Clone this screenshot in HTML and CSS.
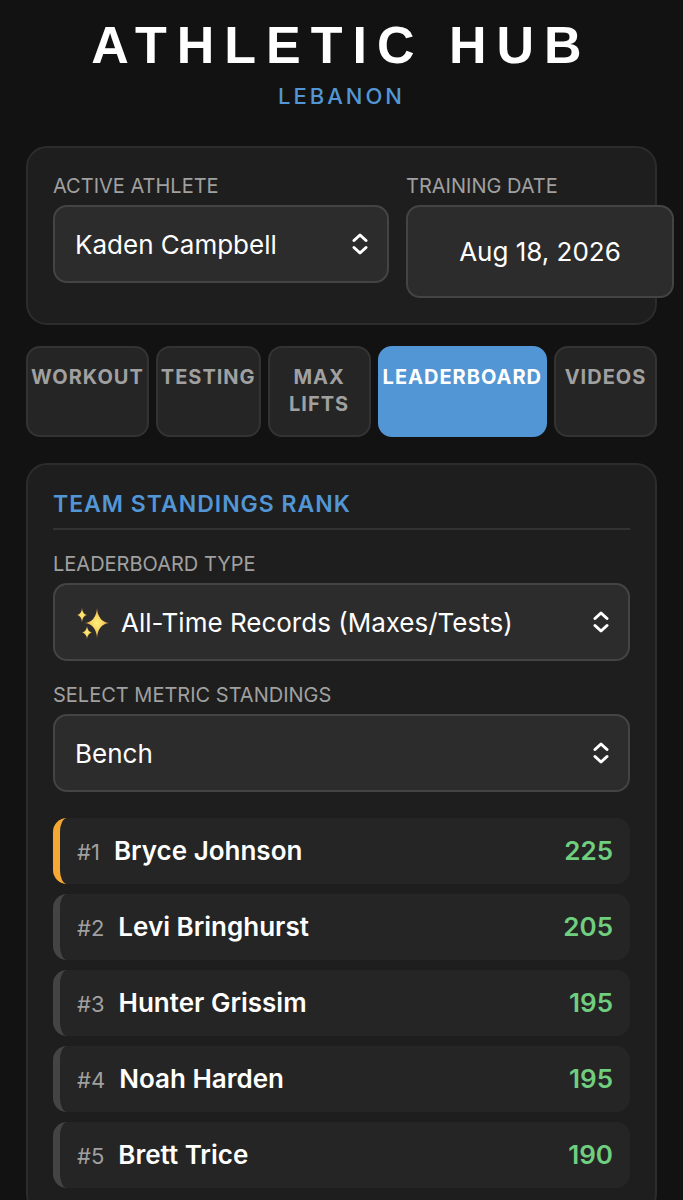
FILE: index.html
```html
<!DOCTYPE html>
<html lang="en">
<head>
<meta charset="utf-8">
<meta name="viewport" content="width=device-width, initial-scale=1">
<title>Athletic Hub</title>
<link rel="stylesheet" href="styles.css">
</head>
<body>
<header class="header">
  <h1 class="brand">ATHLETIC HUB</h1>
  <p class="location">LEBANON</p>
</header>
<main class="main">
  <section class="card session">
    <div class="field">
      <label class="label" for="athlete">ACTIVE ATHLETE</label>
      <div class="picker">
        <select class="control" id="athlete"><option>Kaden Campbell</option></select>
        <svg class="chevrons" viewBox="0 0 16 22" aria-hidden="true"><path d="M2 7.500L8 2L14 7.500M2 14.500L8 20L14 14.500"/></svg>
      </div>
    </div>
    <div class="field">
      <label class="label" for="date">TRAINING DATE</label>
      <input class="control date" id="date" type="text" value="Aug 18, 2026">
    </div>
  </section>

  <nav class="tabs">
    <button class="tab" type="button">WORKOUT</button>
    <button class="tab" type="button">TESTING</button>
    <button class="tab" type="button">MAX LIFTS</button>
    <button class="tab active" type="button">LEADERBOARD</button>
    <button class="tab" type="button">VIDEOS</button>
  </nav>

  <section class="card">
    <h2 class="title">TEAM STANDINGS RANK</h2>
    <div class="field spaced">
      <label class="label" for="type">LEADERBOARD TYPE</label>
      <div class="picker">
        <select class="control with-icon" id="type"><option>All-Time Records (Maxes/Tests)</option></select>
        <svg class="sparkles" viewBox="0 0 32 32" aria-hidden="true">
          <defs><radialGradient id="gold"><stop offset="0" stop-color="#fff07c"/><stop offset=".5" stop-color="#f8d560"/><stop offset="1" stop-color="#c88a3c"/></radialGradient></defs>
          <g fill="url(#gold)">
            <path d="M20 1Q21 14.500 32 16Q21 17.500 20 31Q19 17.500 8 16Q19 14.500 20 1Z"/>
            <path d="M5 1Q5.500 7 10 8Q5.500 9 5 15Q4.500 9 0 8Q4.500 7 5 1Z"/>
            <path d="M10 19Q10.500 24.500 15 25.500Q10.500 26.500 10 32Q9.500 26.500 5 25.500Q9.500 24.500 10 19Z"/>
          </g>
        </svg>
        <svg class="chevrons" viewBox="0 0 16 22" aria-hidden="true"><path d="M2 7.500L8 2L14 7.500M2 14.500L8 20L14 14.500"/></svg>
      </div>
    </div>
    <div class="field spaced">
      <label class="label" for="metric">SELECT METRIC STANDINGS</label>
      <div class="picker">
        <select class="control" id="metric"><option>Bench</option></select>
        <svg class="chevrons" viewBox="0 0 16 22" aria-hidden="true"><path d="M2 7.500L8 2L14 7.500M2 14.500L8 20L14 14.500"/></svg>
      </div>
    </div>
    <ol class="standings">
      <li class="row first"><span class="rank">#1</span><span class="name">Bryce Johnson</span><span class="score">225</span></li>
      <li class="row"><span class="rank">#2</span><span class="name">Levi Bringhurst</span><span class="score">205</span></li>
      <li class="row"><span class="rank">#3</span><span class="name">Hunter Grissim</span><span class="score">195</span></li>
      <li class="row"><span class="rank">#4</span><span class="name">Noah Harden</span><span class="score">195</span></li>
      <li class="row"><span class="rank">#5</span><span class="name">Brett Trice</span><span class="score">190</span></li>
    </ol>
  </section>
</main>
</body>
</html>
```
FILE: styles.css
```css
* { box-sizing: border-box; }
html { background: #121212; scrollbar-width: none; }
body {
  margin: 0;
  padding: 15px 26px 0;
  color: #fff;
  font-family: Inter, Roboto, sans-serif;
}
.header { text-align: center; }
.brand {
  margin: 0;
  font: bold 52px/60px "Liberation Sans", Arial, sans-serif;
  letter-spacing: 10px;
}
.location {
  margin: 7px 0 0;
  font-size: 22px;
  line-height: 28px;
  font-weight: 500;
  letter-spacing: 3px;
  color: #5296d5;
}
.main { margin-top: 36px; }
.card {
  padding: 25px;
  background: #1e1e1e;
  border: 2px solid #2c2c2c;
  border-radius: 21px;
}
.session {
  display: grid;
  grid-template-columns: 3fr 2fr;
  gap: 17px;
}
.field { min-width: 0; }
.label {
  display: block;
  margin-bottom: 6px;
  font-size: 20px;
  line-height: 26px;
  color: #a0a0a0;
}
.picker { position: relative; }
.control {
  display: block;
  width: 100%;
  height: 78px;
  padding: 2px 54px 0 20px;
  appearance: none;
  background: #2c2c2c;
  border: 2px solid #444;
  border-radius: 14px;
  color: #fff;
  font: 26px/34px Inter, Roboto, sans-serif;
}
.with-icon { padding-left: 66px; }
.date {
  width: calc(100% + 44px);
  height: 93px;
  padding: 0 20px;
  text-align: center;
}
.chevrons {
  position: absolute;
  top: 28px;
  right: 21px;
  width: 16px;
  height: 22px;
  fill: none;
  stroke: #fff;
  stroke-width: 3;
  stroke-linecap: round;
  stroke-linejoin: round;
  pointer-events: none;
}
.sparkles {
  position: absolute;
  top: 24px;
  left: 24px;
  width: 32px;
  height: 32px;
  pointer-events: none;
}
.tabs {
  display: flex;
  gap: 7px;
  margin: 21px 0 26px;
}
.tab {
  display: flex;
  flex: 1;
  align-items: flex-start;
  justify-content: center;
  padding: 16px 3px 17px;
  background: #252525;
  border: 2px solid #333;
  border-radius: 14px;
  color: #a0a0a0;
  font: 700 20px/27px Inter, Roboto, sans-serif;
  letter-spacing: 1px;
}
.tab.active {
  background: #5296d5;
  border-color: #5296d5;
  color: #fff;
}
.title {
  margin: 0;
  padding-bottom: 10px;
  border-bottom: 2px solid #333;
  font-size: 23px;
  line-height: 28px;
  font-weight: 600;
  letter-spacing: 1px;
  color: #5296d5;
}
.spaced { margin-top: 21px; }
.standings {
  display: grid;
  gap: 10px;
  margin: 26px 0 0;
  padding: 0;
  list-style: none;
}
.row {
  display: flex;
  align-items: baseline;
  gap: 14px;
  padding: 16px 17px;
  background: #252525;
  border-left: 7px solid #444;
  border-radius: 14px;
  font-size: 26px;
  line-height: 34px;
  font-weight: 600;
}
.first { border-left-color: #f5a834; }
.rank { font-size: 22px; line-height: 26px; font-weight: 400; color: #a0a0a0; }
.name { flex: 1; }
.score { color: #6fcf7f; }
```
